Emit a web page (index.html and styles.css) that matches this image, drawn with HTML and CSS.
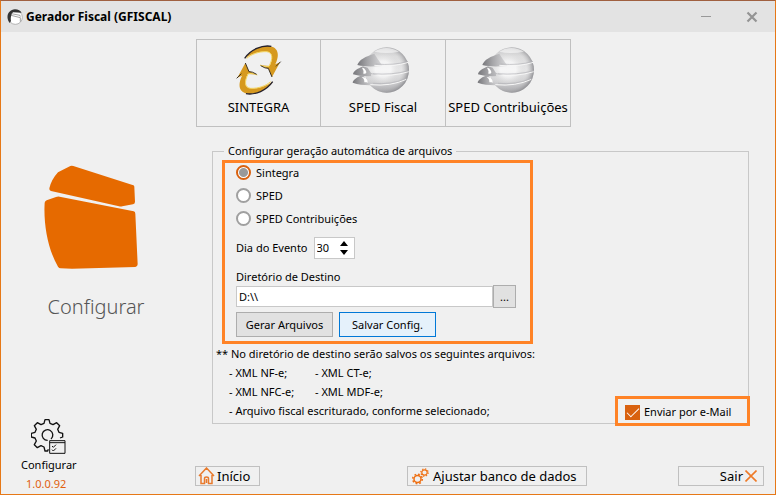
FILE: index.html
```html
<!DOCTYPE html>
<html lang="pt-BR">
<head>
    <meta charset="utf-8">
    <meta name="viewport" content="width=device-width, initial-scale=1">
    <title>Gerador Fiscal (GFISCAL)</title>
    <link rel="stylesheet" href="styles.css">
</head>
<body>
    <svg class="defs" width="0" height="0" aria-hidden="true">
        <defs>
            <linearGradient id="metal" x1="0" y1="0" x2="0" y2="1">
                <stop offset="0" stop-color="#c4c4c6"/>
                <stop offset=".2" stop-color="#dededf"/>
                <stop offset=".5" stop-color="#e9e9ea"/>
                <stop offset=".75" stop-color="#d2d2d4"/>
                <stop offset="1" stop-color="#a4a4a8"/>
            </linearGradient>
            <radialGradient id="shade" cx=".42" cy=".48" r=".58">
                <stop offset=".3" stop-color="#fff" stop-opacity=".6"/>
                <stop offset=".7" stop-color="#ccc" stop-opacity=".1"/>
                <stop offset="1" stop-color="#77777c" stop-opacity=".75"/>
            </radialGradient>
            <linearGradient id="wing" x1="0" y1="0" x2="1" y2="0">
                <stop offset="0" stop-color="#77777b"/>
                <stop offset=".4" stop-color="#a5a5a8"/>
                <stop offset="1" stop-color="#dcdcde"/>
            </linearGradient>
            <symbol id="globe" viewBox="0 0 180 150">
                <ellipse cx="107" cy="75" rx="67" ry="68" fill="url(#metal)"/>
                <ellipse cx="107" cy="75" rx="67" ry="68" fill="url(#shade)"/>
                <path d="M70 26C44 34 24 44 19 60c24 6 50 4 76 3L80 42z" fill="url(#wing)"/>
                <path d="M36 64C18 72 8 78 6 88c20 7 50 6 84 4L60 84 50 68z" fill="url(#wing)"/>
                <path d="M30 92C14 98 6 106 5 113c22 8 46 8 66 7L46 112 40 94z" fill="url(#wing)"/>
                <path d="M33 68q6 8 4 18 12 2 8-8-4-10-12-10zM32 96q9 6 8 16 14 0 8-8-6-10-16-8z" fill="#fff"/>
                <path d="M70 61q56 6 102-9M60 90q62 6 113-10M58 119q60 6 108-16" fill="none" stroke="#f6f6f6" stroke-width="3"/>
                <path d="M74 57q54 5 97-8M66 86q56 5 107-9M66 115q54 5 100-15" fill="none" stroke="#b4b4b8" stroke-width="2"/>
                <path d="M70 20q36-22 74 0-38 8-74 0z" fill="#fff" opacity=".55"/>
            </symbol>
        </defs>
    </svg>

    <div class="window">
        <header class="title-bar">
            <svg class="title-icon" viewBox="0 0 48 48" aria-hidden="true">
                <circle cx="25" cy="25" r="21" fill="#fff" stroke="#999" stroke-width="2"/>
                <path d="M8 42C-6 24 4 2 24 1c10 0 16 4 20 10L18 10c-6 6-8 18-6 26z" fill="#333"/>
                <path d="M13 14l26 5 1 4M12 19l28 7v12" fill="none" stroke="#777" stroke-width="2"/>
            </svg>
            <h1 class="title-text">Gerador Fiscal (GFISCAL)</h1>
            <button class="title-btn" type="button" aria-label="Minimizar">
                <svg width="12" height="12" viewBox="0 0 12 12"><path d="M1 5.500h10" stroke="#999" stroke-width="1"/></svg>
            </button>
            <button class="title-btn" type="button" aria-label="Fechar">
                <svg width="12" height="12" viewBox="0 0 12 12"><path d="M1.500 1.500l9 9M10.500 1.500l-9 9" stroke="#949494" stroke-width="2.200"/></svg>
            </button>
        </header>

        <div class="main">
            <aside class="sidebar">
                <div class="brand">
                    <svg width="94" height="104" viewBox="0 0 282 312" aria-hidden="true">
                        <path d="M79 3q4-2 9 0l180 58q3 1 3 5l2 44q0 6-6 8l-32 6q-5 1-10 0L21 78q-6-2-5-8 6-26 26-48z" fill="#e66a00"/>
                        <path d="M8 106l28-10q5-2 11-1l222 44q5 1 5 7l7 152q0 7-7 8l-190 5-34-1q-5 0-8-5C12 254-2 178 2 113q1-5 6-7z" fill="#e66a00"/>
                    </svg>
                    <h2 class="brand-text">Configurar</h2>
                </div>
                <div class="sidebar-bottom">
                    <button class="config-btn" type="button">
                        <svg width="36" height="36" viewBox="0 0 108 108" fill="none" stroke="#111" stroke-width="4" stroke-linejoin="round">
                            <path d="M52 91l-2 5h-8l-3-12-9-4-11 6-9-9 6-11-4-9-11-3V43l11-3 4-9-6-11 9-9 11 6 9-4 3-11h12l3 11 9 4 11-6 9 9-6 11 4 9 11 3v11l-8 3"/>
                            <path d="M60 60A16 16 0 1 0 50 64"/>
                            <path d="M56 65h46v38H56zM56 71h46M63 81l4 4 8-8M63 92l4 4 8-8" stroke-width="3"/>
                        </svg>
                        Configurar
                    </button>
                    <span class="version">1.0.0.92</span>
                </div>
            </aside>

            <main class="content">
                <nav class="tools">
                    <button class="tool" type="button">
                        <svg width="46" height="50" viewBox="-2 -4 138 150" aria-hidden="true">
                            <g id="arrow">
                                <path d="M25 36C44 10 76-4 100 0c24 4 30 24 16 54l14-6-24 44-10-24-24-11 27 2C110 34 108 18 92 16 66 14 42 24 25 36z" fill="#d6991f"/>
                                <path d="M24 36C42 10 76-5 104 0" fill="none" stroke="#25202a" stroke-width="4"/>
                                <path d="M70 56q16 8 27 4C110 36 108 18 90 16 66 15 44 24 30 36" fill="none" stroke="#f5d55c" stroke-width="3"/>
                                <path d="M72 58q14 9 23 8l11 26M118 60l14-14" fill="none" stroke="#3a3024" stroke-width="3"/>
                            </g>
                            <use href="#arrow" transform="rotate(180 66 71)"/>
                        </svg>
                        SINTEGRA
                    </button>
                    <button class="tool" type="button">
                        <svg class="globe" width="60" height="50" aria-hidden="true"><use href="#globe"/></svg>
                        SPED Fiscal
                    </button>
                    <button class="tool" type="button">
                        <svg class="globe" width="60" height="50" aria-hidden="true"><use href="#globe"/></svg>
                        SPED Contribuições
                    </button>
                </nav>

                <form class="config-form">
                    <fieldset class="config-group">
                        <legend>Configurar geração automática de arquivos</legend>
                        <div class="highlight">
                            <label class="radio"><input type="radio" name="tipo" value="sintegra" checked>Sintegra</label>
                            <label class="radio"><input type="radio" name="tipo" value="sped">SPED</label>
                            <label class="radio"><input type="radio" name="tipo" value="contribuicoes">SPED Contribuições</label>
                            <div class="day-row">
                                <label for="dia">Dia do Evento</label>
                                <div class="spinner">
                                    <input id="dia" type="number" min="1" max="31" value="30">
                                    <svg width="8" height="14" viewBox="0 0 8 14" aria-hidden="true"><path d="M4 0l4 5H0zM0 9h8l-4 5z"/></svg>
                                </div>
                            </div>
                            <label class="dir-label" for="diretorio">Diretório de Destino</label>
                            <div class="dir-row">
                                <input id="diretorio" type="text" value="D:\\">
                                <button class="btn" type="button">...</button>
                            </div>
                            <div class="actions">
                                <button class="btn" type="button">Gerar Arquivos</button>
                                <button class="btn btn-active" type="button">Salvar Config.</button>
                            </div>
                        </div>
                        <p class="note">** No diretório de destino serão salvos os seguintes arquivos:</p>
                        <ul class="files">
                            <li>- XML NF-e;</li>
                            <li>- XML CT-e;</li>
                            <li>- XML NFC-e;</li>
                            <li>- XML MDF-e;</li>
                            <li class="wide">- Arquivo fiscal escriturado, conforme selecionado;</li>
                        </ul>
                        <label class="email"><input type="checkbox" name="email" checked>Enviar por e-Mail</label>
                    </fieldset>
                </form>

                <footer class="footer">
                    <button class="footer-btn" type="button">
                        <svg width="17" height="18" viewBox="0 0 17 18" fill="none" stroke="#e87a2c" stroke-width="1.500" aria-hidden="true">
                            <path d="M1 9l7.500-8L16 9M3 8v8.500h3.500v-5q0-1.500 2-1.500t2 1.500v5H14V8M8.500 12v4"/>
                        </svg>
                        Início
                    </button>
                    <button class="footer-btn footer-db" type="button">
                        <svg width="17" height="17" viewBox="0 0 17 17" fill="none" stroke="#ee7014" aria-hidden="true">
                            <circle cx="5.500" cy="11" r="3.500" stroke-width="1.500"/>
                            <circle cx="5.500" cy="11" r="4.800" stroke-width="1.500" stroke-dasharray="1.800 1.970"/>
                            <circle cx="12.500" cy="4.500" r="2.700" stroke-width="1.200"/>
                            <circle cx="12.500" cy="4.500" r="3.700" stroke-width="1.200" stroke-dasharray="1.400 1.500"/>
                        </svg>
                        Ajustar banco de dados
                    </button>
                    <button class="footer-btn footer-exit" type="button">
                        Sair
                        <svg width="12" height="12" viewBox="0 0 12 12" stroke="#ee7a28" stroke-width="1.600" aria-hidden="true"><path d="M.5.5l11 11M11.500.5l-11 11"/></svg>
                    </button>
                </footer>
            </main>
        </div>
    </div>
</body>
</html>
```
FILE: styles.css
```css
* {
    box-sizing: border-box;
}
body {
    margin: 0;
    font-family: "Noto Sans", "Open Sans", sans-serif;
    font-size: 12px;
    line-height: 16px;
    color: #000;
    background: #f0f0f0;
}
button, input {
    font: inherit;
    color: inherit;
    margin: 0;
}
.defs {
    position: absolute;
}
.window {
    display: flex;
    flex-direction: column;
    min-height: 100vh;
    border: 1px solid #e67817;
    border-top-color: #a06040;
}
.title-bar {
    display: flex;
    align-items: center;
    height: 31px;
    padding: 0 11px 0 6px;
    background: #e3e3e3;
}
.title-icon {
    width: 16px;
    height: 16px;
    margin-right: 3px;
}
.title-text {
    flex: 1;
    margin: 0;
    font-size: 12px;
    font-weight: bold;
}
.title-btn {
    display: flex;
    justify-content: center;
    width: 24px;
    margin-left: 22px;
    padding: 0;
    border: 0;
    background: none;
}
.main {
    flex: 1;
    display: grid;
    grid-template-columns: 194px 1fr;
}
.sidebar {
    display: flex;
    flex-direction: column;
    justify-content: space-between;
}
.brand {
    display: flex;
    flex-direction: column;
    align-items: center;
    padding: 133px 4px 0 0;
}
.brand svg {
    margin-right: 10px;
}
.brand-text {
    margin: 24px 0 0;
    font-size: 20px;
    line-height: 28px;
    font-weight: 300;
    color: #555;
}
.sidebar-bottom {
    display: flex;
    flex-direction: column;
    align-items: flex-start;
    gap: 3px;
    padding: 0 0 2px 20px;
}
.config-btn {
    display: flex;
    flex-direction: column;
    align-items: center;
    gap: 2px;
    padding: 0;
    border: 0;
    background: none;
    font-size: 11px;
}
.version {
    padding-left: 5px;
    font-size: 11px;
    color: #e0600f;
}
.content {
    display: flex;
    flex-direction: column;
    padding: 7px 11px 8px 0;
}
.tools {
    display: flex;
    padding-left: 1px;
}
.tool {
    display: flex;
    flex-direction: column;
    align-items: center;
    gap: 3px;
    width: 125px;
    height: 88px;
    padding: 5px 0 0;
    border: 1px solid #c0c0c0;
    background: none;
    font-size: 13px;
    line-height: 18px;
    white-space: nowrap;
}
.tool + .tool {
    border-left: 0;
}
.globe {
    margin-right: 4px;
}
.config-form {
    padding: 16px 15px 0 17px;
}
.config-group {
    position: relative;
    margin: 0;
    padding: 1px 3px 3px;
    border: 1px solid #c8c8c8;
    font-size: 11px;
}
.config-group legend {
    margin-left: 8px;
    padding: 0 4px;
}
.highlight {
    max-width: 311px;
    margin-left: 6px;
    padding: 2px 14px 4px 11px;
    border: 3px solid #ff8327;
}
.radio {
    display: flex;
    align-items: center;
    gap: 5px;
    height: 15px;
    margin-bottom: 8px;
}
.radio input {
    appearance: none;
    width: 15px;
    height: 15px;
    border: 2px solid #a0a0a0;
    border-radius: 50%;
    background: #fff;
}
.radio input:checked {
    border-color: #d9610f;
    background: radial-gradient(circle, #999 4px, #fff 5px);
}
.day-row {
    display: flex;
    align-items: center;
    gap: 6px;
    margin: 11px 0 10px;
}
.spinner {
    display: flex;
    align-items: center;
    width: 41px;
    height: 22px;
    padding: 0 6px 0 2px;
    border: 1px solid #c8c8c8;
    background: #fff;
}
.spinner input {
    appearance: textfield;
    flex: 1;
    min-width: 0;
    padding: 0;
    border: 0;
    outline: 0;
    background: none;
}
.spinner input::-webkit-inner-spin-button {
    display: none;
}
.dir-label {
    display: block;
}
.dir-row {
    display: flex;
    align-items: center;
}
.dir-row input {
    flex: 1;
    min-width: 0;
    height: 21px;
    padding: 0 2px;
    border: 1px solid #c8c8c8;
    background: #fff;
}
.dir-row .btn {
    width: 23px;
    height: 23px;
}
.btn {
    height: 25px;
    padding: 0;
    border: 1px solid #adadad;
    background: #e1e1e1;
}
.btn-active {
    border-color: #0078d7;
    background: #e5f1fb;
}
.actions {
    display: flex;
    gap: 6px;
    margin-top: 4px;
}
.actions .btn {
    width: 97px;
}
.note {
    margin: 0;
    line-height: 19px;
}
.files {
    display: grid;
    grid-template-columns: 86px 1fr;
    margin: 0;
    padding: 0 0 0 13px;
    list-style: none;
    line-height: 19px;
}
.files .wide {
    grid-column: 1/3;
}
/* sits over the corner of the group box */
.email {
    position: absolute;
    right: -2px;
    bottom: -3px;
    display: flex;
    align-items: center;
    gap: 4px;
    width: 135px;
    height: 30px;
    padding: 2px 0 0 7px;
    border: 3px solid #ff8327;
    white-space: nowrap;
}
.email input {
    appearance: none;
    width: 15px;
    height: 15px;
    background: #d9610f;
    display: grid;
    place-items: center;
}
.email input:checked::before {
    content: "";
    width: 11px;
    height: 5px;
    border: solid #fff;
    border-width: 0 0 1px 1px;
    transform: translateY(-1px) rotate(-45deg);
}
.footer {
    display: flex;
    margin-top: auto;
}
.footer-btn {
    display: flex;
    align-items: center;
    gap: 2px;
    width: 65px;
    height: 20px;
    padding: 0 2px;
    border: 1px solid #c0c0c0;
    background: none;
    font-size: 13px;
    line-height: 18px;
    white-space: nowrap;
}
.footer-db {
    gap: 4px;
    width: 180px;
    margin-left: 147px;
    padding-left: 4px;
}
.footer-exit {
    justify-content: flex-end;
    width: 86px;
    margin-left: auto;
    padding-right: 6px;
}
```
